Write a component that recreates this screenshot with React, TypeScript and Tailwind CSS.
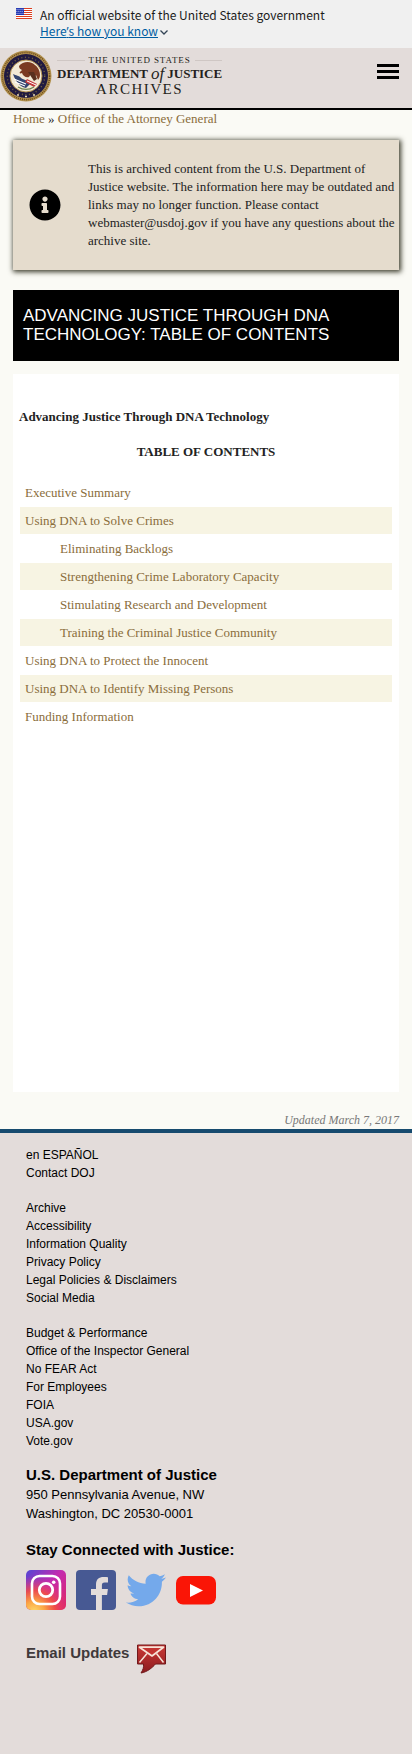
import { FaInfoCircle, FaTwitter } from "react-icons/fa";

const contents = [
  { label: "Executive Summary", nested: false },
  { label: "Using DNA to Solve Crimes", nested: false },
  { label: "Eliminating Backlogs", nested: true },
  { label: "Strengthening Crime Laboratory Capacity", nested: true },
  { label: "Stimulating Research and Development", nested: true },
  { label: "Training the Criminal Justice Community", nested: true },
  { label: "Using DNA to Protect the Innocent", nested: false },
  { label: "Using DNA to Identify Missing Persons", nested: false },
  { label: "Funding Information", nested: false },
];

const footerGroups = [
  ["en ESPAÑOL", "Contact DOJ"],
  [
    "Archive",
    "Accessibility",
    "Information Quality",
    "Privacy Policy",
    "Legal Policies & Disclaimers",
    "Social Media",
  ],
  [
    "Budget & Performance",
    "Office of the Inspector General",
    "No FEAR Act",
    "For Employees",
    "FOIA",
    "USA.gov",
    "Vote.gov",
  ],
];

function Flag() {
  return (
    <svg viewBox="0 0 16 11" className="mt-2 h-[11px] w-4 shrink-0" aria-hidden="true">
      <rect width="16" height="11" fill="#fff" />
      {[0, 2, 4, 6, 8, 10].map((y) => (
        <rect key={y} y={y} width="16" height="1" fill="#db3e1f" />
      ))}
      <rect width="8" height="7" fill="#1e33b1" />
      {[1, 3, 5].map((y) =>
        [1, 3, 5, 7].map((x) => (
          <circle key={`${x}-${y}`} cx={x - (y === 3 ? 0.9 : 0)} cy={y + 0.3} r="0.5" fill="#fff" />
        )),
      )}
    </svg>
  );
}

function Seal() {
  return (
    <svg viewBox="0 0 52 52" className="size-[52px] shrink-0" aria-hidden="true">
      <circle cx="26" cy="26" r="25.500" fill="#b3924f" />
      <circle cx="26" cy="26" r="23.6" fill="none" stroke="#6b4a1c" strokeWidth="1.6" strokeDasharray="1 1" />
      <circle cx="26" cy="26" r="22" fill="#211a40" />
      <circle cx="26" cy="26" r="18.7" fill="none" stroke="#75673f" strokeWidth="1.4" strokeDasharray="1 2.6" />
      <circle cx="26" cy="26" r="16" fill="#f3ead6" stroke="#b3924f" strokeWidth="1" />
      <path
        d="M19 16c3-4 9-5 13-3 4 2 8 6 8 12 0 2-1 4-2 5l-2-5-2 4-3-5-2 3c-3 1-6-1-7-4-2 1-3 0-2-1l2-2c-2-1-3-2-3-4z"
        fill="#7b3b22"
      />
      <path d="M28 22l6 9 3-2-3-7z" fill="#58301e" />
      <path d="M13 24c3 2 6 1 8 4 3 2 7 2 9 6l-4 4c-5-1-10-5-13-14z" fill="#34456f" />
      <path d="M14 29l12 5M15 32l10 4" stroke="#fff" strokeWidth="1.1" />
      <path d="M27 29l10 5-3 3-9-5z" fill="#c33a3c" />
      <path d="M27 31l9 4" stroke="#fff" strokeWidth="1" />
      <path d="M18 37c5 3 11 3 16 0" fill="none" stroke="#6f8450" strokeWidth="1.3" />
      <path d="M17 45h2M25 46.500h2M33 45h2" stroke="#e6d9b8" strokeWidth="1.500" />
    </svg>
  );
}

function Instagram() {
  return (
    <svg viewBox="0 0 40 40" className="size-10" aria-hidden="true">
      <defs>
        <linearGradient id="ig-base" x1="0" y1="0" x2="1" y2="1">
          <stop offset="0" stopColor="#5146d6" />
          <stop offset="0.45" stopColor="#c32bb0" />
          <stop offset="1" stopColor="#e0265f" />
        </linearGradient>
        <radialGradient id="ig-glow" cx="0.2" cy="1.05" r="0.9">
          <stop offset="0" stopColor="#ffdc6a" />
          <stop offset="0.3" stopColor="#fba545" />
          <stop offset="0.6" stopColor="#f4503f" stopOpacity="0.85" />
          <stop offset="1" stopColor="#e0308a" stopOpacity="0" />
        </radialGradient>
      </defs>
      <rect width="40" height="40" rx="5" fill="url(#ig-base)" />
      <rect width="40" height="40" rx="5" fill="url(#ig-glow)" />
      <rect x="6" y="6" width="28" height="28" rx="7.500" fill="none" stroke="#fff" strokeWidth="2.600" />
      <circle cx="20" cy="20" r="6.700" fill="none" stroke="#fff" strokeWidth="2.800" />
      <circle cx="27.700" cy="12.300" r="1.800" fill="#fff" />
    </svg>
  );
}

function Facebook() {
  return (
    <svg viewBox="0 0 40 40" className="size-10" aria-hidden="true">
      <rect width="40" height="40" rx="4" fill="#475993" />
      <path
        d="M20 40V25h-5v-6h5v-4.500C20 9.300 23 7 27.600 7c2 0 3.900.2 4.400.3v5.200h-3.200c-2.400 0-2.900 1.200-2.900 2.900V19h6l-.8 6h-5.200v15z"
        fill="#e3dcda"
      />
    </svg>
  );
}

function YouTube() {
  return (
    <svg viewBox="0 0 40 40" className="size-10" aria-hidden="true">
      <rect y="6" width="40" height="28.500" rx="7" fill="#fa1506" />
      <path d="M14 14l13 6.500L14 27z" fill="#fff" />
    </svg>
  );
}

function MailBubble() {
  return (
    <svg viewBox="0 0 30 30" className="size-[30px]" aria-hidden="true">
      <defs>
        <linearGradient id="mail-red" x1="0" y1="0" x2="0" y2="1">
          <stop offset="0" stopColor="#cb3a36" />
          <stop offset="1" stopColor="#8c1b1f" />
        </linearGradient>
      </defs>
      <path d="M.5 1h28v19H18.500C15 24 10 28 4 29c2-3 3-6 2.500-9h-6z" fill="url(#mail-red)" stroke="#70191b" />
      <path d="M2.500 3.200h24L15 12z" fill="#c33431" stroke="#f7e3d8" strokeWidth="1.700" strokeLinejoin="round" />
      <path d="M2.500 18.500L10 9.500M26.500 18.500L19.500 9.500" stroke="#f7e3d8" strokeWidth="1.500" />
    </svg>
  );
}

const socials = [
  { name: "Instagram", icon: <Instagram /> },
  { name: "Facebook", icon: <Facebook /> },
  { name: "Twitter", icon: <FaTwitter className="size-10 text-[#74a9eb]" /> },
  { name: "YouTube", icon: <YouTube /> },
];

export default function App() {
  return (
    <div className="flex min-h-screen flex-col bg-[#fafaf5] font-['Liberation_Serif',serif] text-[13px] leading-[18px] text-[#222]">
      <section
        aria-label="Official government website"
        className="flex h-12 gap-2 bg-[#f0f0f0] pl-4 font-['Noto_Sans_CJK_SC',sans-serif] text-[12px] leading-4 text-[#1b1b1b]"
      >
        <Flag />
        <div className="pt-[7px]">
          <p>An official website of the United States government</p>
          <button type="button" className="flex items-center text-[#005ea2]">
            <span className="underline">
              Here<span className="font-['Open_Sans',sans-serif]">’</span>s how you know
            </span>
            <svg viewBox="0 0 10 10" className="ml-px size-[10px]" aria-hidden="true">
              <path d="M1.500 3.500L5 7l3.500-3.500" fill="none" stroke="#345" strokeWidth="1.300" />
            </svg>
          </button>
        </div>
      </section>

      <header className="flex h-[62px] items-start justify-between border-b-2 border-black bg-[#e3dcda] pr-[13px]">
        <a href="#home" className="flex pt-[2px]">
          <Seal />
          <span className="flex flex-col items-center pt-1 pl-[5px] text-[#251f20]">
            <span className="flex w-full items-center gap-1 text-[9px] leading-[13px] whitespace-nowrap">
              <span className="h-px grow bg-[#cfc7c4]" />
              <span className="tracking-widest">THE UNITED STATES</span>
              <span className="h-px grow bg-[#cfc7c4]" />
            </span>
            <span className="flex items-center text-[13px] leading-[14px] font-bold whitespace-nowrap">
              DEPARTMENT
              <i className="px-[3px] text-[17px] font-normal">of</i>
              JUSTICE
            </span>
            <span className="text-[15px] leading-[17px] tracking-widest">ARCHIVES</span>
          </span>
        </a>
        <button type="button" aria-label="Menu" className="mt-4 flex w-[22px] flex-col gap-[3px]">
          <span className="h-[3px] w-full bg-black" />
          <span className="h-[3px] w-full bg-black" />
          <span className="h-[3px] w-full bg-black" />
        </button>
      </header>

      <main className="px-[13px]">
        <nav aria-label="Breadcrumb" className="text-[#8a6d3b]">
          <a href="#home">Home</a> <span className="text-[#222]">»</span>{" "}
          <a href="#oag">Office of the Attorney General</a>
        </nav>

        <aside className="mt-3 flex items-center bg-[#e5dccd] py-5 pl-4 shadow-[1px_1px_5px_1px_#3c3c2c]">
          <FaInfoCircle className="size-8 shrink-0 text-black" />
          <p className="ml-[27px]">
            This is archived content from the U.S. Department of Justice website. The information here may be
            outdated and links may no longer function. Please contact webmaster@usdoj.gov if you have any
            questions about the archive site.
          </p>
        </aside>

        <h1 className="mt-5 bg-black px-[10px] pt-4 pb-[17px] font-['Liberation_Sans',sans-serif] text-[17px] leading-[19px] text-white uppercase">
          Advancing Justice Through DNA Technology: Table of Contents
        </h1>

        <article className="mt-[13px] min-h-[718px] bg-white px-[6px] pt-[34px]">
          <h2 className="font-bold">Advancing Justice Through DNA Technology</h2>
          <h3 className="mt-[17px] text-center font-bold">TABLE OF CONTENTS</h3>
          <table className="mt-[17px] w-full border-separate border-spacing-px">
            <tbody>
              {contents.map((item) => (
                <tr key={item.label} className="even:bg-[#f7f4e3]">
                  <td className={item.nested ? "py-1 pl-10 leading-[19px]" : "py-1 pl-[5px] leading-[19px]"}>
                    <a href="#section" className="text-[#8a6d3b]">
                      {item.label}
                    </a>
                  </td>
                </tr>
              ))}
            </tbody>
          </table>
        </article>

        <p className="pt-[19px] text-right text-[12px] text-[#777] italic">Updated March 7, 2017</p>
      </main>

      <footer className="grow border-t-4 border-[#164a6e] bg-[#e3dcda] px-[26px] pt-[13px] pb-[78px] font-['Liberation_Sans',sans-serif] text-[12px] text-black">
        <div className="flex flex-col gap-[17px]">
          {footerGroups.map((group) => (
            <ul key={group[0]}>
              {group.map((label) => (
                <li key={label}>
                  <a href="#footer">{label}</a>
                </li>
              ))}
            </ul>
          ))}
        </div>
        <h2 className="mt-[15px] text-[15px] leading-5 font-bold">U.S. Department of Justice</h2>
        <address className="text-[13px] leading-[19px] not-italic">
          950 Pennsylvania Avenue, NW
          <br />
          Washington, DC 20530-0001
        </address>
        <h2 className="mt-[17px] text-[15px] leading-5 font-bold">Stay Connected with Justice:</h2>
        <div className="mt-[10px] flex gap-[10px]">
          {socials.map((social) => (
            <a key={social.name} href="#social" aria-label={social.name}>
              {social.icon}
            </a>
          ))}
        </div>
        <a href="#email" className="mt-[34px] flex items-start gap-2 text-[15px] leading-[18px] font-bold text-[#40393a]">
          Email Updates
          <MailBubble />
        </a>
      </footer>
    </div>
  );
}
